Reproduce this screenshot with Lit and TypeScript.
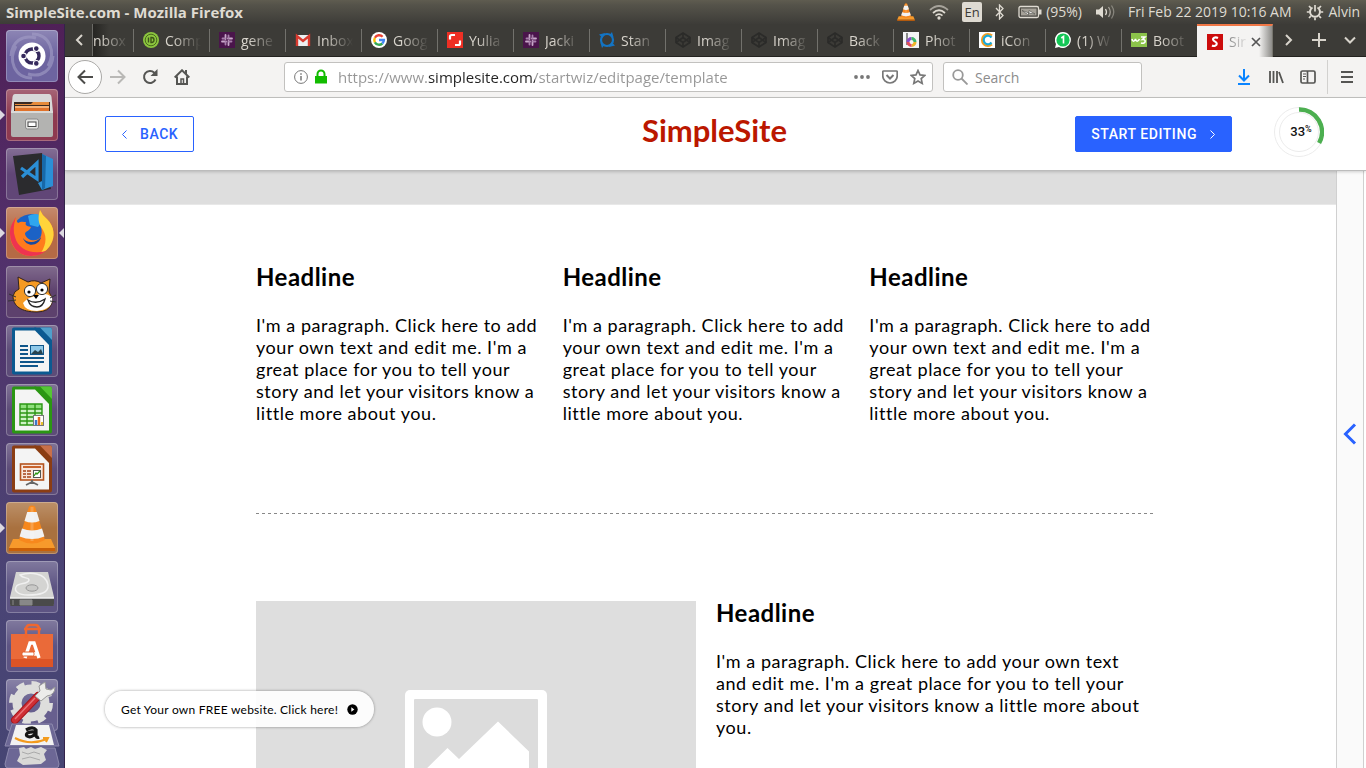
import { LitElement, html, svg, css } from "lit";
import { customElement, property } from "lit/decorators.js";
import { classMap } from "lit/directives/class-map.js";

const codepen = svg`<g fill="none" stroke="#2b2b29" stroke-width="1.6"><path d="M8 1 15 5.500v5L8 15 1 10.500v-5z"/><path d="M1 5.500 8 10.500l7-5M1 10.500 8 5.500l7 5M8 1v4.500M8 10.500V15"/></g>`;
const slack = svg`<rect width="16" height="16" fill="#4a154b"/><g stroke="#c9a9cb" stroke-width="1.800" stroke-linecap="round"><path d="M6.500 3v4M9.500 9v4M3 9.500h4M9 6.500h4"/><path d="M9.500 3.500V6M6.500 10v2.500M3.500 6.500H6M10 9.500h2.500" stroke="#a77fab"/></g>`;

const favicons: Record<string, unknown> = {
  none: svg``,
  slack,
  codepen,
  comp: svg`<circle cx="8" cy="8" r="8" fill="#8cc63f"/><circle cx="8" cy="8" r="5.800" fill="none" stroke="#4a6a1d" stroke-width="1"/><path d="M5.500 5.500v5M8 5.500v5h.8a2.200 2.500 0 0 0 0-5z" fill="none" stroke="#3c5518" stroke-width="1.400"/>`,
  gmail: svg`<path d="M1 3h14v11H1z" fill="#eceff1"/><path d="M2 14V4l6 5 6-5v10" fill="none" stroke="#d93a2f" stroke-width="2.400"/>`,
  google: svg`<circle cx="8" cy="8" r="8" fill="#fff"/><g fill="none" stroke-width="2.400"><path d="M11.600 4.700A4.800 4.800 0 0 0 3.900 5.700" stroke="#ea4335"/><path d="M3.900 5.700a4.800 4.800 0 0 0 0 4.600" stroke="#fbbc05"/><path d="M3.900 10.300a4.800 4.800 0 0 0 7.400 1.200" stroke="#34a853"/><path d="M11.300 11.500A4.800 4.800 0 0 0 12.900 8H8" stroke="#4285f4"/></g>`,
  yulia: svg`<rect width="16" height="16" fill="#ee2f24"/><path d="M3 7.500V4.500A1.500 1.500 0 0 1 4.500 3H8M13 8.500v3a1.500 1.500 0 0 1-1.500 1.500H8" fill="none" stroke="#fff" stroke-width="2.200"/>`,
  stan: svg`<circle cx="8" cy="8" r="6" fill="none" stroke="#1374c4" stroke-width="2.200"/><path d="M0 2.500 6 1 3.500 6zM16 13.500 10 15l2.500-5zM13 0l1.500 5-4-2zM3 16l-1.500-5 4 2z" fill="#1374c4"/>`,
  photo: svg`<rect width="16" height="16" fill="#f4f4f6"/><path d="M4 1v12" stroke="#444" stroke-width="1.200"/><g fill="none" stroke-width="3"><path d="M5 10a3.500 3.500 0 0 1 3.500-3.500" stroke="#8a4bc9"/><path d="M8.500 6.500A3.500 3.500 0 0 1 12 10" stroke="#3fb56a"/><path d="M12 10a3.500 3.500 0 0 1-3.500 3.500" stroke="#f0b42a"/><path d="M8.500 13.500A3.500 3.500 0 0 1 5 10" stroke="#e34b5c"/></g>`,
  iconn: svg`<rect width="16" height="16" fill="#fff"/><g fill="none" stroke-width="2.200"><path d="M13 3.500A6 6 0 1 0 13 12.500" stroke="#f39c1f"/><path d="M12.500 5.500a4.300 4.300 0 1 0 0 5" stroke="#19a9d8"/></g>`,
  whatsapp: svg`<path d="M8 0a8 8 0 1 1-4 15L0 16l1-4A8 8 0 0 1 8 0z" fill="#fff"/><circle cx="8" cy="8" r="6.600" fill="#14c656"/><path d="M6.300 6 8.500 4.500v7" fill="none" stroke="#fff" stroke-width="1.600"/>`,
  w3: svg`<rect width="16" height="14" y="1" fill="#8bc34a"/><path d="M1 7c.5 3 2.500 3 3.500 0 .5 3 2.500 3 4 0M10 5h4l-2.500 2.500c4-.5 3.500 5-1.500 3.500" fill="none" stroke="#fff" stroke-width="1.600"/>`,
  simple: svg`<rect width="16" height="16" fill="#cc0c0c"/><path d="M11 4C8 2.500 5.500 4 6.200 6c.5 1.400 3.600 1.500 3.600 3.800 0 2-2.800 2.700-4.800 1.700" fill="none" stroke="#fff" stroke-width="2.100"/>`,
};

const tabs = [
  { label: "nbox", icon: "none" },
  { label: "Comp", icon: "comp" },
  { label: "gene", icon: "slack" },
  { label: "Inbox", icon: "gmail" },
  { label: "Goog", icon: "google" },
  { label: "Yulia", icon: "yulia" },
  { label: "Jacki", icon: "slack" },
  { label: "Stan", icon: "stan" },
  { label: "Imag", icon: "codepen" },
  { label: "Imag", icon: "codepen" },
  { label: "Back", icon: "codepen" },
  { label: "Phot", icon: "photo" },
  { label: "iCon", icon: "iconn" },
  { label: "(1) W", icon: "whatsapp" },
  { label: "Boot", icon: "w3" },
  { label: "Sir", icon: "simple" },
];

const cone = svg`<path d="M7 37h38l4 9H3z" fill="#f79a2b"/><path d="M3 46h46v3H3z" fill="#c95f06"/><path d="M23 4.500q3-2 6 0L39 38q-13 7-26 0z" fill="#f7881d"/><path d="M21.200 10h9.600l2.700 9q-7.500 3-15 0zM16 26.500q10 4 20 0l2.400 8q-12.400 5-24.800 0z" fill="#f1f1f1"/><path d="M26 5v34" stroke="#fff" stroke-width="3" opacity=".2"/>`;
const sheet = (dark: string, light: string, body: unknown) => svg`
  <path d="M8 2.500h22L46 19v28.500q0 2-2 2H8q-2 0-2-2v-43q0-2 2-2z" fill="${dark}"/>
  <path d="M28 2.500h16q2 0 2 2v16z" fill="${dark}"/>
  <path d="M34 2.500h10q2 0 2 2V15z" fill="${light}"/>
  <path d="M9 5.500h20L43 20v26.500H9z" fill="#f4f4f4"/>${body}`;

interface LaunchItem { name: string; tint: string; art: unknown; left?: boolean; right?: boolean; }

const launchers: LaunchItem[] = [
  { name: "Search your computer", tint: "#6d64a0", art: svg`
    <path d="M26 4C44 4 50 22 42 36M26 48C8 48 2 30 10 16M5 26C6 12 16 4 30 8M47 26C46 40 36 48 22 44" fill="none" stroke="#a49fc6" stroke-width="3" opacity=".6"/>
    <circle cx="26" cy="26" r="13.500" fill="#fff"/><circle cx="26" cy="26" r="7" fill="none" stroke="#35295c" stroke-width="3.400"/>
    <g fill="#35295c" stroke="#fff" stroke-width="1.200"><circle cx="17.500" cy="26" r="2.900"/><circle cx="30.300" cy="18.600" r="2.900"/><circle cx="30.300" cy="33.400" r="2.900"/></g>` },
  { name: "Files", tint: "#8e3a50", left: true, art: svg`
    <path d="M9 5h34q2 0 2.500 3l1.500 15H5L6.500 8Q7 5 9 5z" fill="#d8d8d8"/><path d="M8 13h36v11H8z" fill="#3a2a22"/><path d="M9 15h16l2-2h16v3H9z" fill="#e58a3a"/><path d="M9 17h34v7H9z" fill="#f3b27a"/><path d="M9 19h34v5H9z" fill="#e0722a"/>
    <path d="M5 22h42v24q0 2-2 2H7q-2 0-2-2z" fill="#b3b3b1"/><path d="M5 22h42v2H5z" fill="#d9d9d7"/><rect x="19.500" y="30" width="13" height="10" rx="2" fill="#e4e4e2" stroke="#888"/><rect x="22" y="33" width="8" height="4.500" fill="#fff" stroke="#444"/>` },
  { name: "Visual Studio Code", tint: "#614677", art: svg`
    <path d="M7 8 36 5l9 36-32 6z" fill="#2b2b2e"/><path d="m36 6 11 5v27l-11 4-4-7 4-2z" fill="#2b8fd6"/><path d="m36 6 4 2-1 32-3 2z" fill="#1769a9"/><path d="m15 20 16 11V15L16 29" fill="none" stroke="#2b8fd6" stroke-width="3.200"/>` },
  { name: "Firefox", tint: "#b56a45", left: true, right: true, art: svg`
    <circle cx="26" cy="27" r="20" fill="#1b62c6"/><path d="M22 9q10-5 16 3l-6 8-8-2z" fill="#2fa6ee"/>
    <path d="M34 3q2 5 7 9c8 8 8 18 4 25-5 9-13 12-20 12C11 49 4 38 4 27c0-7 3-12 6-17q0 4 2 6c3-2 6-1 8-1-1 3 0 4 5 5-1 4-6 4-6 7 2 8 14 8 16 2 3-8-4-14-1-26z" fill="#ff7b1c"/>
    <path d="M34 3q2 5 7 9c8 8 8 18 4 25-2 4-6 8-10 9 6-10 6-18 0-26-3-5-3-11-1-17z" fill="#ffd43a"/><path d="M4 26c0 11 7 23 21 23 6 0 11-2 15-5-15 4-28-2-31-14q-3-8 1-20c-3 5-6 9-6 16z" fill="#ee3450"/><path d="M17 31c3 5 13 6 18-1-1 8-14 12-18 1z" fill="#174a9f"/>` },
  { name: "Scratch", tint: "#5d416d", art: svg`
    <path d="M13 23 12 11l10 5q7-3 13 1l9-4-1 13q4 5 3 11-3 9-15 9C15 46 7 40 7 30q1-5 6-7z" fill="#f59a23" stroke="#33231b"/>
    <path d="M29 30q9-5 17 1 2 12-15 14-12 0-14-8 4-5 12-7z" fill="#fff"/><circle cx="24" cy="25" r="5.600" fill="#fff" stroke="#333"/><circle cx="36" cy="23" r="5.600" fill="#fff" stroke="#333"/><circle cx="23" cy="26" r="1.600"/><circle cx="36" cy="24" r="1.600"/><path d="M27 29h6l-3 4z"/><path d="M22 34q8 5 17-1-2 8-8 8-7 0-9-7z" fill="#fff" stroke="#222" stroke-width="1.300"/><path d="m3 28 7 3M2 35l8-1M44 32l6-3M44 35l6 1" stroke="#333"/>` },
  { name: "LibreOffice Writer", tint: "#5d4c78", art: sheet("#0c5a91", "#4f9fcb", svg`<path d="M14 21h8M14 25h8M14 29h8M14 33h24M14 37h24M14 41h18" stroke="#10568a" stroke-width="2"/><rect x="24.500" y="20.500" width="13" height="9" fill="#8fc8e8" stroke="#10568a"/><path d="m25 29 4-4 3 2 3-3 2 5z" fill="#28434f"/>`) },
  { name: "LibreOffice Calc", tint: "#5d4c78", art: sheet("#2b9613", "#55c634", svg`<path d="M14 20h22v21H14z" fill="#cdf2c4"/><path d="M14 20h22v5H14z" fill="#8fe07c"/><path d="M14 20h22v21H14zM14 25h22M14 29h22M14 33h22M14 37h22M21 20v21M29 20v21" fill="none" stroke="#2b9613" stroke-width="1.400"/><rect x="27.500" y="31.500" width="10" height="10" fill="#fff" stroke="#777"/><path d="M30 41v-5" stroke="#3c78c8" stroke-width="2.500"/><path d="M33 41v-8" stroke="#e46a1c" stroke-width="2.500"/><path d="M36 41v-3" stroke="#e8c22b" stroke-width="2"/>`) },
  { name: "LibreOffice Impress", tint: "#5d4c78", art: sheet("#8b3d13", "#c8704a", svg`<rect x="14.500" y="21" width="23" height="16" fill="#f8e6dc" stroke="#b4531f" stroke-width="1.600"/><path d="M17 24h18" stroke="#c8622c" stroke-width="2"/><path d="M17 28h3M17 31h3M17 34h3M21 28h4M21 31h4M21 34h4" stroke="#a24218" stroke-width="1.600"/><rect x="27.500" y="27.500" width="7" height="7" fill="#fff" stroke="#555"/><path d="m28 33 2-3 1 1 3-3" fill="none" stroke="#2b9613" stroke-width="1.300"/><path d="M26 37v4M20 42l6-3 6 3" fill="none" stroke="#666" stroke-width="1.800"/>`) },
  { name: "VLC media player", tint: "#a9713f", left: true, art: cone },
  { name: "Disk", tint: "#5d5483", art: svg`
    <path d="M10 11h32l6 25v7q0 1-1 1H5q-1 0-1-1v-7z" fill="#d4d4d2"/><path d="M4 37h44v6q0 2-1 2H5q-1 0-1-2z" fill="#4a4a4a"/><path d="M4 37h44" stroke="#f2f2f2" stroke-width="1.600"/><path d="M7 39v5M14 39v5h12v-5z" stroke="#888" fill="#888"/><path d="M14 14c9-3 26-3 28 10 1 8-8 10-20 10-10 0-14-4-12-8 2-5 12-2 13-7 0-3-6-1-9-5z" fill="none" stroke="#f0f0f0" stroke-width="1.400"/><ellipse cx="26" cy="27" rx="6" ry="3.200" fill="#c9c9c7" stroke="#999"/>` },
  { name: "Ubuntu Software", tint: "#5d5483", art: svg`
    <path d="M5 14h42v32q0 1-1 1H6q-1 0-1-1z" fill="#ea6a39"/><path d="M5 39h42v8H5z" fill="#dd5426"/><path d="M20 18V9q0-4 4-4h5q4 0 4 4v9M18 9h17" fill="none" stroke="#f0672e" stroke-width="2.400"/><path d="M19 38 24 23h4l5 15M17 34h16" fill="none" stroke="#fff" stroke-width="3.400"/><rect x="16" y="32" width="12" height="4" rx="1.500" fill="#fff" stroke="#e0602f"/>` },
  { name: "System Settings", tint: "#675f8e", art: svg`
    <circle cx="25" cy="24" r="14" fill="none" stroke="#dededc" stroke-width="9"/><circle cx="25" cy="24" r="19.500" fill="none" stroke="#dededc" stroke-width="5" stroke-dasharray="8.200 7.100"/>
    <path d="M9 41 32 17" stroke="#a8161c" stroke-width="8" stroke-linecap="round"/><path d="M9 41 32 17" stroke="#cf2e34" stroke-width="6" stroke-linecap="round"/><path d="m9 40 20-21" stroke="#ea7377" stroke-width="1.500"/><path d="m29 17 5-5-1-5 6-4 1 7 5 1 4-3q0 8-8 9l-6 5z" fill="#ececea" stroke="#999"/>` },
];

@customElement("dock-launcher")
export class DockLauncher extends LitElement {
  static styles = css`
    :host { display: flex; flex-direction: column; align-items: center; gap: 7px; flex: none; width: 65px; padding-top: 6px; box-sizing: border-box; overflow: hidden;
      background: linear-gradient(#4f2057, #52306b 30%, #4e3c6f 55%, #4a4475 75%, #464573); border-right: 1px solid #33234a; }
    .tile { position: relative; flex: none; width: 52px; height: 52px; padding: 0; border: 0; border-radius: 4px; box-shadow: inset 0 0 0 1px rgba(255,255,255,.25); }
    .tile::before { content: ""; position: absolute; inset: 0; border-radius: 4px; background: linear-gradient(rgba(255,255,255,.22), rgba(255,255,255,0) 50%); }
    .art { position: relative; display: block; width: 52px; height: 52px; }
    .run, .focus { position: absolute; top: 21px; border: 5px solid transparent; width: 0; height: 0; }
    .run { left: -6px; border-left-color: #dcd8e0; border-right: 0; }
    .focus { right: -6px; border-right-color: #dcd8e0; border-left: 0; }
    .stack { position: relative; flex: none; padding: 0; border: 0; background: none; margin-top: -15px; height: 46px; }
  `;
  render() {
    return html`${launchers.map((l) => html`
      <button class="tile" aria-label=${l.name} style="background-color:${l.tint}">
        <svg class="art" viewBox="0 0 52 52" aria-hidden="true">${l.art}</svg>
        ${l.left ? html`<i class="run"></i>` : ""}${l.right ? html`<i class="focus"></i>` : ""}
      </button>`)}
      <button class="stack" aria-label="More applications">
        <svg width="56" height="46" viewBox="0 0 56 46" aria-hidden="true">
          <path d="M8 1h40l7 22H1z" fill="#6c6795" stroke="#8d89ad"/><path d="M12 2h33l5 20H6z" fill="#f2f2f2"/>
          <path d="M22 7q7-4 10 0v6q1 2 3 1M32 9c-8-1-11 2-9 4 3 2 7 0 9-3" fill="none" stroke="#161616" stroke-width="3.200"/><path d="M11 15q15 8 32 1m-4-1 5 0-2 4" fill="none" stroke="#f39a1c" stroke-width="2"/>
          <path d="M5 25h46l4 16q0 4-3 4H4q-3 0-3-4z" fill="#6c6795" stroke="#8d89ad"/><path d="m15 25 5-1 2 2 5-2 4 2 6-2 6 3-3 4 2 6-5 4-18 1-6-4 3-6z" fill="#d9d9d7"/><path d="m18 29 6 2 6-2 6 2M18 36l8-2 10 3" stroke="#aaa" fill="none"/>
        </svg>
      </button>`;
  }
}

@customElement("system-panel")
export class SystemPanel extends LitElement {
  static styles = css`
    :host { display: flex; align-items: center; flex: none; height: 24px; padding: 0 6px 1px; box-sizing: border-box; color: #dfdbd2; font: 14px "Open Sans", sans-serif; background: linear-gradient(#5f5c50, #55534a 20%, #3d3c38); }
    .title { flex: 1; font-size: 15px; font-weight: 700; }
    .tray { display: flex; align-items: center; gap: 13px; }
    .pair { display: flex; align-items: center; gap: 4px; }
    .lang { background: #dfdbd2; color: #3c3b37; border-radius: 2px; width: 20px; line-height: 20px; text-align: center; font-size: 13px; }
    svg { display: block; }
  `;
  render() {
    return html`
      <span class="title">SimpleSite.com - Mozilla Firefox</span>
      <div class="tray">
        <svg width="20" height="22" viewBox="0 0 52 52">${cone}</svg>
        <svg width="20" height="16" viewBox="0 0 20 16" fill="none" stroke="#dfdbd2" stroke-width="1.700"><path d="M1 6q9-8 18 0" opacity=".6"/><path d="M4 9q6-5.500 12 0M6.500 11.700q3.500-3 7 0"/><circle cx="10" cy="14" r=".8"/></svg>
        <span class="lang">En</span>
        <svg width="10" height="16" viewBox="0 0 10 16" fill="none" stroke="#dfdbd2" stroke-width="1.300"><path d="m1 4 7 7.500-3.500 3.500V1L8 4.500 1 12"/></svg>
        <div class="pair">
          <svg width="24" height="14" viewBox="0 0 24 14"><rect x="1" y="1.500" width="19.500" height="11" rx="1.500" fill="none" stroke="#dfdbd2" stroke-width="1.300"/><path d="M3 3.500h15.500v7H3z" fill="#a5a198"/><path d="M21 4.500h2.500v5H21z" fill="#dfdbd2"/><path d="m4 5.500 7 2.500V5.500l6 3.500-6.500-1V10z" fill="#fff" stroke="#4a4943" stroke-width=".6"/></svg>
          <span>(95%)</span>
        </div>
        <svg width="20" height="16" viewBox="0 0 20 16"><path d="M1 5.500h3L8 2v12l-4-3.500H1z" fill="#dfdbd2"/><g fill="none" stroke="#dfdbd2" stroke-width="1.300"><path d="M10.500 5q2 3 0 6"/><path d="M13.500 3q3.500 5 0 10" opacity=".6"/><path d="M16.500 1.500q4.500 6.500 0 13" opacity=".4"/></g></svg>
        <span>Fri Feb 22 2019 10:16 AM</span>
        <div class="pair">
          <svg width="20" height="18" viewBox="0 0 18 18" fill="none" stroke="#dfdbd2"><path d="M6.500 4.500a5 5 0 1 0 5 0" stroke-width="2"/><path d="M9 2v6.500M3 3l1.800 1.800M15 3l-1.800 1.800M.8 9h2.700M14.500 9h2.700M3 15l1.800-1.800M15 15l-1.800-1.800M9 14.500v2.700" stroke-width="1.700"/></svg>
          <span>Alvin</span>
        </div>
      </div>`;
  }
}

@customElement("browser-chrome")
export class BrowserChrome extends LitElement {
  static styles = css`
    :host { display: block; flex: none; font-family: "Open Sans", sans-serif; }
    button { border: 0; padding: 0; background: none; font: inherit; color: inherit; display: grid; place-items: center; flex: none; }
    svg { display: block; flex: none; }
    .strip { display: flex; height: 33px; background: #3c3b37; color: #d8d4cc; font-size: 14px; box-sizing: border-box; border-bottom: 1px solid #23221f; }
    .scroll { width: 28px; border-right: 1px solid #6b6a66; }
    .tabs { display: flex; flex: 0 1 1181px; min-width: 0; }
    .tab { position: relative; display: flex; align-items: center; gap: 6px; width: 76px; height: 32px; padding-left: 10px; box-sizing: border-box; justify-content: flex-start; }
    .tab:not(.active):not(.cut)::before { content: ""; position: absolute; left: 0; top: 5px; bottom: 4px; width: 1px; background: #72716c; }
    .cut { width: 40px; padding-left: 0; background: linear-gradient(90deg, #262522, #3c3b37 16px); }
    .name { flex: none; width: 40px; overflow: hidden; text-align: left; white-space: nowrap; mask-image: linear-gradient(90deg, #000 8px, transparent 36px); }
    .active { background: linear-gradient(90deg, #f4f3f2 62px, #8d8c89); color: #888; height: 33px; border-top: 2px solid #f07746; border-right: 1px solid #77766f; }
    .active .name { width: 18px; mask-image: linear-gradient(90deg, #000, transparent 20px); }
    .active .close { margin-left: -2px; }
    .tools { display: flex; flex: 1; align-items: center; justify-content: space-around; }
    .bar { display: flex; align-items: center; height: 40px; background: #f4f3f2; border-bottom: 1px solid #c4c4c2; box-sizing: content-box; color: #5a5a58; }
    .nav { display: flex; align-items: center; width: 219px; padding-left: 3px; box-sizing: border-box; }
    .back { width: 34px; height: 34px; border: 1px solid #aaa9a7; border-radius: 50%; background: #fff; box-sizing: border-box; }
    .nav .small { width: 32px; height: 32px; }
    .field { display: flex; align-items: center; height: 30px; box-sizing: border-box; border: 1px solid #c2c1bf; border-radius: 3px; background: #fff; }
    .url { flex: 1; min-width: 0; padding: 0 6px 0 9px; }
    .info { margin-right: 6px; }
    .search { width: 199px; margin-left: 10px; padding-left: 8px; gap: 7px; }
    input { flex: 1; min-width: 0; width: 100%; border: 0; padding: 0; outline: 0; background: none; font: 14px "Open Sans", sans-serif; color: #8c8c8c; }
    input::placeholder { color: #8c8c8c; opacity: 1; }
    .address { margin-left: 10px; font-size: 15px; -webkit-text-fill-color: transparent; background: linear-gradient(90deg, #969696 var(--from), #222 var(--from), #222 var(--to), #969696 var(--to)); background-clip: text; -webkit-background-clip: text; --from: 90px; --to: 197px; }
    .actions { display: flex; gap: 12px; }
    .side { display: flex; align-items: center; justify-content: flex-end; width: 224px; }
    .side button { width: 32px; height: 32px; }
    .side .menu { width: 39px; margin-left: 3px; height: 34px; border-left: 1px solid #d2d1cf; }
  `;
  render() {
    return html`
      <div class="strip">
        <button class="scroll" aria-label="Scroll tabs left"><svg width="12" height="14" viewBox="0 0 12 14" fill="none" stroke="#d8d4cc" stroke-width="2"><path d="M9 2 4 7l5 5"/></svg></button>
        <div class="tabs" role="tablist">${tabs.map((t, i) => {
          const active = i === tabs.length - 1;
          return html`<button role="tab" aria-selected=${active} class=${classMap({ tab: true, active, cut: i === 0 })}>
            ${i === 0 ? "" : html`<svg width="16" height="16" viewBox="0 0 16 16" aria-hidden="true">${favicons[t.icon]}</svg>`}
            <span class="name">${t.label}</span>
            ${active ? html`<svg class="close" width="10" height="10" viewBox="0 0 10 10" stroke="#555" stroke-width="1.700"><path d="m1 1 8 8M9 1 1 9"/></svg>` : ""}
          </button>`;
        })}</div>
        <div class="tools">
          <button aria-label="Scroll tabs right"><svg width="12" height="14" viewBox="0 0 12 14" fill="none" stroke="#d8d4cc" stroke-width="2"><path d="m3 2 5 5-5 5"/></svg></button>
          <button aria-label="New tab"><svg width="14" height="14" viewBox="0 0 14 14" stroke="#d8d4cc" stroke-width="2"><path d="M7 0v14M0 7h14"/></svg></button>
          <button aria-label="List all tabs"><svg width="14" height="14" viewBox="0 0 14 14" fill="none" stroke="#d8d4cc" stroke-width="2"><path d="m2 4.500 5 5 5-5"/></svg></button>
        </div>
      </div>
      <div class="bar">
        <div class="nav">
          <button class="back" aria-label="Back"><svg width="16" height="16" viewBox="0 0 16 16" fill="none" stroke="#4c4c4a" stroke-width="2"><path d="M16 8H2M8 1.500 1.500 8 8 14.500"/></svg></button>
          <button class="small" aria-label="Forward"><svg width="16" height="16" viewBox="0 0 16 16" fill="none" stroke="#b9b8b6" stroke-width="2"><path d="M0 8h14M8 1.500 14.500 8 8 14.500"/></svg></button>
          <button class="small" aria-label="Reload"><svg width="16" height="16" viewBox="0 0 16 16" fill="none" stroke="#555553" stroke-width="2"><path d="M13.500 10.500A6 6 0 1 1 12.300 3.700L14 5.500"/><path d="M15.500 0v7h-7z" fill="#555553" stroke="none"/></svg></button>
          <button class="small" aria-label="Home"><svg width="16" height="16" viewBox="0 0 16 16" fill="none" stroke="#555553" stroke-width="2"><path d="M.7 8.500 8 1.300l7.300 7.200M3 7.500V15h10V7.500"/><path d="M7 14v-4h2.500v4" stroke-width="1.500"/><path d="M12 1v4" /></svg></button>
        </div>
        <div class="field url">
          <svg class="info" width="14" height="14" viewBox="0 0 14 14" fill="none" stroke="#777"><circle cx="7" cy="7" r="6.400"/><path d="M7 6v4.500M7 3.200v1.600" stroke-width="1.500"/></svg>
          <svg width="14" height="16" viewBox="0 0 14 16"><path d="M1 7h12v7.500H1z" fill="#12bc00"/><path d="M3.500 8V5a3.500 3.500 0 0 1 7 0v3" fill="none" stroke="#12bc00" stroke-width="2"/></svg>
          <input class="address" aria-label="Address" value="https://www.simplesite.com/startwiz/editpage/template" />
          <div class="actions">
            <button aria-label="Page actions"><svg width="16" height="16" viewBox="0 0 16 16" fill="#777"><circle cx="2" cy="8" r="1.900"/><circle cx="8" cy="8" r="1.900"/><circle cx="14" cy="8" r="1.900"/></svg></button>
            <button aria-label="Save to Pocket"><svg width="16" height="16" viewBox="0 0 16 16" fill="none" stroke="#777" stroke-width="1.700"><path d="M1.500 2h13q.7 0 .7.700V7a7.200 7 0 0 1-14.400 0V2.700q0-.7.700-.7z"/><path d="m4.500 6 3.500 3.500L11.500 6" stroke-width="2"/></svg></button>
            <button aria-label="Bookmark this page"><svg width="16" height="16" viewBox="0 0 16 16" fill="none" stroke="#777" stroke-width="1.700"><path d="m8 1.500 2 4.400 4.800.5-3.600 3.200 1 4.800L8 12l-4.200 2.400 1-4.800L1.200 6.400 6 5.900z"/></svg></button>
          </div>
        </div>
        <div class="field search">
          <svg width="16" height="16" viewBox="0 0 16 16" fill="none" stroke="#999" stroke-width="1.800"><circle cx="6" cy="6" r="4.800"/><path d="m9.500 9.500 6 6"/></svg>
          <input aria-label="Search" placeholder="Search" />
        </div>
        <div class="side">
          <button aria-label="Downloads"><svg width="14" height="16" viewBox="0 0 14 16" fill="none" stroke="#0a84ff" stroke-width="2"><path d="M7 0v11M2 6.500 7 11.500l5-5M1 15h12"/></svg></button>
          <button aria-label="Library"><svg width="16" height="16" viewBox="0 0 16 16" fill="none" stroke="#555553" stroke-width="1.800"><path d="M2 2v12M5.500 2v12M9 2v12M11 3l4 11"/></svg></button>
          <button aria-label="Sidebars"><svg width="16" height="16" viewBox="0 0 16 16" fill="none" stroke="#555553" stroke-width="1.700"><rect x="1" y="2" width="14" height="12" rx="1.500"/><path d="M7.500 2v12"/><path d="M3 5h3M3 7.500h3M3 10h2" stroke-width="1.200"/></svg></button>
          <button class="menu" aria-label="Open menu"><svg width="14" height="14" viewBox="0 0 14 14" stroke="#555553" stroke-width="2"><path d="M1 2h12M1 7h12M1 12h12"/></svg></button>
        </div>
      </div>`;
  }
}

@customElement("text-block")
export class TextBlock extends LitElement {
  static styles = css`
    :host { display: block; color: #000; font-family: Lato, sans-serif; }
    h2 { margin: 0 0 23px; font-size: 24px; line-height: 28px; font-weight: 700; letter-spacing: 0.02em; }
    p { margin: 0; font-size: 18px; line-height: 22px; letter-spacing: 0.03em; }
  `;
  @property() heading = "Headline";
  render() {
    return html`<h2>${this.heading}</h2>
      <p>I'm a paragraph. Click here to add your own text and edit me. I'm a great place for you to tell your story and let your visitors know a little more about you.</p>`;
  }
}

@customElement("app-root")
export class AppRoot extends LitElement {
  static styles = css`
    :host { display: flex; flex-direction: column; height: 100vh; overflow: hidden; background: #fff; }
    .desk { display: flex; flex: 1; min-height: 0; }
    .window { display: flex; flex-direction: column; flex: 1; min-width: 0; position: relative; }
    .head { position: relative; z-index: 1; display: grid; grid-template-columns: 1fr auto 1fr; align-items: center; flex: none; height: 72px; padding: 0 42px 0 40px; background: #fff; border-bottom: 1px solid #bcbcbc; box-shadow: 0 1px 3px rgba(0,0,0,.18); box-sizing: content-box; }
    .btn { display: flex; align-items: center; gap: 12px; height: 36px; padding: 0 15px; box-sizing: border-box; border: 1px solid #2962ff; border-radius: 2px; background: #fff; color: #2962ff; font: 500 14px Roboto, sans-serif; letter-spacing: 0.04em; white-space: nowrap; }
    .btn.primary { background: #2962ff; color: #fff; }
    .back { justify-self: start; }
    .logo { padding-bottom: 8px; color: #bb1700; font: 700 31px/40px Lato, sans-serif; text-decoration: none; }
    .right { display: flex; align-items: center; justify-content: flex-end; gap: 42px; }
    .ring { position: relative; display: grid; place-items: center; width: 50px; height: 50px; margin-bottom: 4px; font: 500 13px Roboto, sans-serif; color: #111; }
    .ring svg { position: absolute; inset: 0; }
    .pct { display: flex; align-items: flex-start; line-height: 16px; padding-left: 4px; }
    .pct sup { font-size: 9px; line-height: 10px; }
    .stage { display: flex; flex: 1; min-height: 0; }
    .page { flex: 1; min-width: 0; overflow: hidden; background: #fff; }
    .band { height: 33px; background: #dedede; border-bottom: 1px solid #e8e8e8; }
    .content { width: 900px; max-width: 90%; margin: 0 auto; padding: 58px 0 0 11px; }
    .cols { display: grid; grid-template-columns: repeat(3, 1fr); gap: 20px; }
    .rule { height: 1px; margin: 89px 0 87px; border: 0; background: repeating-linear-gradient(90deg, #888 0 3px, transparent 3px 6px); }
    .feature { display: grid; grid-template-columns: 1fr 1fr; gap: 20px; align-items: start; }
    .photo { display: flex; justify-content: center; aspect-ratio: 4 / 3; padding-top: 89px; box-sizing: border-box; background: #dedede; }
    .feature text-block { margin-top: -2px; padding-right: 10px; }
    .panel { display: grid; place-items: center; flex: none; width: 28px; margin-right: 2px; padding: 0 0 72px; box-sizing: border-box; background: #fafafa; border: solid #d0d0d0; border-width: 0 1px; }
    .promo { position: absolute; left: 40px; bottom: 41px; display: flex; align-items: center; gap: 9px; height: 36px; padding: 0 16px; border-radius: 18px; background: rgba(255,255,255,.9); box-shadow: 0 0 3px rgba(0,0,0,.4); color: #000; font: 12px Lato, sans-serif; letter-spacing: 0.02em; text-decoration: none; white-space: nowrap; }
  `;
  render() {
    return html`
      <system-panel></system-panel>
      <div class="desk">
        <dock-launcher></dock-launcher>
        <div class="window">
          <browser-chrome></browser-chrome>
          <header class="head">
            <button class="btn back"><svg width="7" height="9" viewBox="0 0 7 9" fill="none" stroke="currentColor"><path d="M5.500.5 1.500 4.500l4 4"/></svg>BACK</button>
            <a class="logo" href="#">SimpleSite</a>
            <div class="right">
              <button class="btn primary">START EDITING<svg width="7" height="9" viewBox="0 0 7 9" fill="none" stroke="currentColor"><path d="m1.500.5 4 4-4 4"/></svg></button>
              <div class="ring">
                <svg width="50" height="50" viewBox="0 0 50 50" fill="none"><circle cx="25" cy="25" r="24.500" stroke="#ececec"/><circle cx="25" cy="25" r="19.500" stroke="#ececec"/><path d="M25 2.500A22.500 22.500 0 0 1 45.100 36" stroke="#4caf50" stroke-width="4.500"/></svg>
                <span class="pct">33<sup>%</sup></span>
              </div>
            </div>
          </header>
          <div class="stage">
            <main class="page">
              <div class="band"></div>
              <div class="content">
                <section class="cols"><text-block></text-block><text-block></text-block><text-block></text-block></section>
                <hr class="rule" />
                <section class="feature">
                  <div class="photo"><svg width="142" height="120" viewBox="0 0 142 120" aria-hidden="true"><rect width="142" height="120" rx="5" fill="#fff"/><rect x="9" y="9" width="124" height="102" rx="1" fill="#dcdcdc"/><circle cx="32" cy="32" r="14.500" fill="#fff"/><path d="M9 91 42.500 58 54 69 93 31.500l31 30V103H9z" fill="#fff"/></svg></div>
                  <text-block></text-block>
                </section>
              </div>
            </main>
            <aside class="panel"><svg width="14" height="22" viewBox="0 0 14 22" fill="none" stroke="#2962ff" stroke-width="3"><path d="M12 1.500 2.500 11l9.500 9.500"/></svg></aside>
          </div>
          <a class="promo" href="#">Get Your own FREE website. Click here!
            <svg width="11" height="11" viewBox="0 0 11 11"><circle cx="5.500" cy="5.500" r="5.200"/><path d="M4.300 3.200 7.300 5.500l-3 2.300z" fill="#fff"/></svg></a>
        </div>
      </div>`;
  }
}
